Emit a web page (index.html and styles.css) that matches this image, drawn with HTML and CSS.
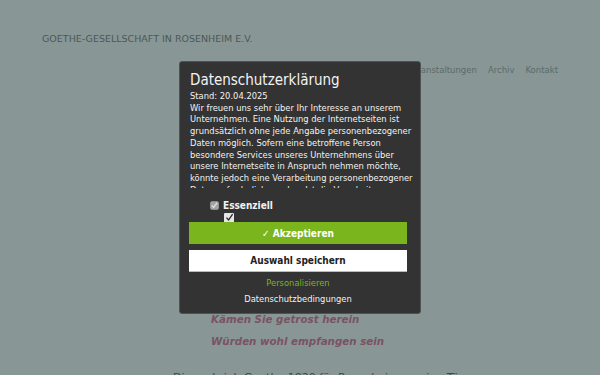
FILE: index.html
```html
<!DOCTYPE html>
<html lang="de">
  <head>
    <meta charset="UTF-8" />
    <meta name="viewport" content="width=device-width, initial-scale=1.0" />
    <title>Goethe-Gesellschaft in Rosenheim e.V.</title>
    <link rel="stylesheet" href="styles.css">
  </head>
  <body>
    <div class="page">
      <header class="site-header">
        <div class="site-title">GOETHE-GESELLSCHAFT IN ROSENHEIM E.V.</div>
        <nav class="site-nav">
          <a href="#">Start</a>
          <a href="#">Veranstaltungen</a>
          <a href="#">Archiv</a>
          <a href="#">Kontakt</a>
        </nav>
      </header>

      <main class="content">
        <div class="poem">
          <p>Wer da geht in Rosenheim</p>
          <p>Trifft auf Blumen, Glück und Wein</p>
          <p>Kämen Sie getrost herein</p>
          <p>Würden wohl empfangen sein</p>
        </div>
        <p class="poem-note">Dies schrieb Goethe 1820 für Rosenheim an eine Tür</p>
      </main>
    </div>

    <!-- Cookie consent -->
    <div class="consent-overlay">
      <div class="consent-box">
        <h2 class="consent-title">Datenschutzerklärung</h2>
        <div class="consent-text">
          <p>Stand: 20.04.2025</p>
          <p>Wir freuen uns sehr über Ihr Interesse an unserem Unternehmen. Eine Nutzung der Internetseiten ist grundsätzlich ohne jede Angabe personenbezogener Daten möglich. Sofern eine betroffene Person besondere Services unseres Unternehmens über unsere Internetseite in Anspruch nehmen möchte, könnte jedoch eine Verarbeitung personenbezogener Daten erforderlich werden. Ist die Verarbeitung personenbezogener Daten erforderlich und besteht für eine solche Verarbeitung keine gesetzliche Grundlage, holen wir generell eine Einwilligung der betroffenen Person ein.</p>
        </div>

        <div class="consent-groups">
          <label class="consent-group">
            <input type="checkbox" checked disabled />
            <span>Essenziell</span>
          </label>
          <span class="consent-check">
            <svg width="9" height="9" viewBox="0 0 9 9"><path d="M1.5 4.6 L3.6 7 L7.6 1.2" fill="none" stroke="#222" stroke-width="1.3"/></svg>
          </span>
        </div>

        <button class="btn btn-accept">&#10003; Akzeptieren</button>
        <button class="btn btn-save">Auswahl speichern</button>

        <a class="consent-link link-custom" href="#">Personalisieren</a>
        <a class="consent-link link-privacy" href="#">Datenschutzbedingungen</a>
      </div>
    </div>
  </body>
</html>
```

FILE: styles.css
```css
* {
  margin: 0;
  padding: 0;
  box-sizing: border-box;
}

body {
  font-family: "DejaVu Sans", Verdana, sans-serif;
  background-color: #889796;
  height: 100vh;
  overflow: hidden;
}

a {
  text-decoration: none;
}

.site-header {
  padding: 33px 42px 0 42px;
}

.site-title {
  font-size: 9.5px;
  color: #4b5757;
}

.site-nav {
  display: flex;
  justify-content: flex-end;
  gap: 11px;
  margin-top: 21px;
}

.site-nav a {
  font-size: 8.5px;
  color: #5b6a6a;
}

.content {
  padding: 0 0 0 173px;
}

.poem {
  padding-left: 38px;
  margin-top: 189px;
}

.poem p {
  font-size: 10.3px;
  font-weight: bold;
  font-style: italic;
  color: #7a5262;
  line-height: 22px;
}

.poem p:nth-child(1),
.poem p:nth-child(2) {
  visibility: hidden;
}

.poem-note {
  font-size: 11px;
  color: #3e4848;
  margin-top: 19px;
}

/* overlay */
.consent-overlay {
  position: fixed;
  inset: 0;
  display: flex;
  justify-content: center;
  align-items: center;
}

.consent-box {
  width: 242px;
  height: 253px;
  background-color: #333333;
  border: 1px solid #505353;
  border-radius: 3px;
  padding: 8px 13px 0 9px;
  display: flex;
  flex-direction: column;
  color: #f2f2f2;
  font-family: "DejaVu Sans Condensed", "DejaVu Sans", sans-serif;
}

.consent-title {
  font-size: 15px;
  font-weight: normal;
  line-height: 20px;
  padding-left: 1px;
}

.consent-text {
  font-size: 9.3px;
  line-height: 11.7px;
  height: 98px;
  overflow: hidden;
  margin-right: -7px;
  padding-left: 1px;
}

.consent-groups {
  display: flex;
  flex-direction: column;
  padding-left: 21px;
  margin-top: 12px;
}

.consent-group {
  display: flex;
  align-items: center;
  gap: 4px;
  font-size: 10px;
  font-weight: bold;
}

.consent-group input {
  width: 9px;
  height: 9px;
  margin: 0;
  accent-color: #888;
}

.consent-check {
  display: flex;
  align-items: center;
  justify-content: center;
  width: 10px;
  height: 9px;
  margin-left: 14px;
  margin-top: 2px;
  background-color: #e6e6e6;
  border-radius: 1px 1px 0 0;
}

.btn {
  width: 100%;
  height: 22px;
  border: none;
  font-family: "DejaVu Sans Condensed", "DejaVu Sans", sans-serif;
  font-size: 10px;
  font-weight: bold;
  cursor: pointer;
}

.btn-accept {
  background-color: #7ab51d;
  color: #fff;
}

.btn-save {
  margin-top: 6px;
  background-color: #fff;
  color: #222;
  border-bottom: 1px solid #bbb;
}

.consent-link {
  text-align: center;
  font-size: 9.3px;
}

.link-custom {
  color: #7ab51d;
  margin-top: 5px;
}

.link-privacy {
  color: #f2f2f2;
  margin-top: 5px;
}
```
